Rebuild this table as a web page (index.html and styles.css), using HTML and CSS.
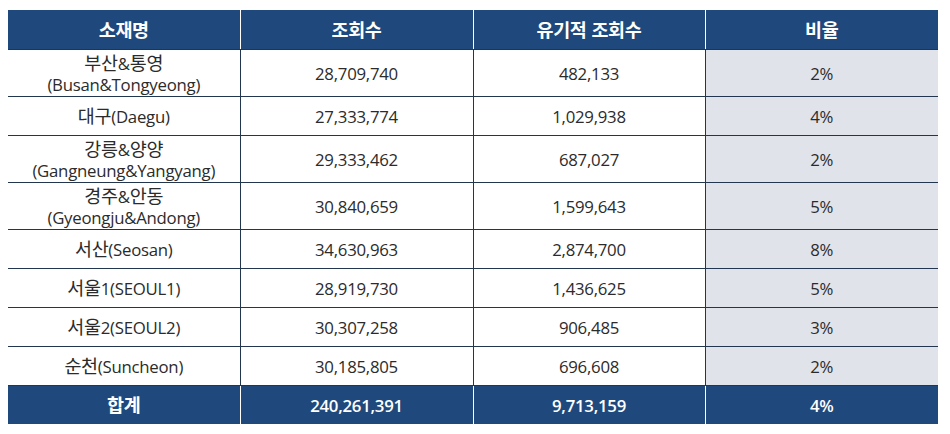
FILE: index.html
```html
<!DOCTYPE html>
<html lang="ko">
<head>
<meta charset="utf-8">
<link rel="stylesheet" href="styles.css">
</head>
<body>
<table class="stats">
  <colgroup>
    <col class="c1"><col class="c2"><col class="c3"><col class="c4">
  </colgroup>
  <thead>
    <tr class="head"><th><span class="ko">소재명</span></th><th><span class="ko">조회수</span></th><th><span class="ko">유기적 조회수</span></th><th><span class="ko">비율</span></th></tr>
  </thead>
  <tbody>
    <tr class="tall"><td><span class="ko">부산</span>&amp;<span class="ko">통영</span><br>(Busan&amp;Tongyeong)</td><td>28,709,740</td><td>482,133</td><td class="pct">2%</td></tr>
    <tr><td><span class="ko">대구</span>(Daegu)</td><td>27,333,774</td><td>1,029,938</td><td class="pct">4%</td></tr>
    <tr class="tall"><td><span class="ko">강릉</span>&amp;<span class="ko">양양</span><br>(Gangneung&amp;Yangyang)</td><td>29,333,462</td><td>687,027</td><td class="pct">2%</td></tr>
    <tr class="tall"><td><span class="ko">경주</span>&amp;<span class="ko">안동</span><br>(Gyeongju&amp;Andong)</td><td>30,840,659</td><td>1,599,643</td><td class="pct">5%</td></tr>
    <tr><td><span class="ko">서산</span>(Seosan)</td><td>34,630,963</td><td>2,874,700</td><td class="pct">8%</td></tr>
    <tr><td><span class="ko">서울</span>1(SEOUL1)</td><td>28,919,730</td><td>1,436,625</td><td class="pct">5%</td></tr>
    <tr><td><span class="ko">서울</span>2(SEOUL2)</td><td>30,307,258</td><td>906,485</td><td class="pct">3%</td></tr>
    <tr><td><span class="ko">순천</span>(Suncheon)</td><td>30,185,805</td><td>696,608</td><td class="pct">2%</td></tr>
  </tbody>
  <tfoot>
    <tr class="foot"><td><span class="ko">합계</span></td><td>240,261,391</td><td>9,713,159</td><td>4%</td></tr>
  </tfoot>
</table>
</body>
</html>
```

FILE: styles.css
```css
html, body {
  margin: 0;
  padding: 0;
  background: #ffffff;
}
body {
  padding: 10px 0 0 8px;
  font-family: "Open Sans", "Noto Sans CJK KR", sans-serif;
  color: #2b2b2b;
}
.stats {
  border-collapse: collapse;
  table-layout: fixed;
  width: 930px;
  font-size: 16.8px;
  letter-spacing: -0.25px;
}
.c1 { width: 232px; }
.c2 { width: 233px; }
.c3 { width: 232px; }
.c4 { width: 233px; }
.stats th, .stats td {
  padding: 0;
  text-align: center;
  vertical-align: middle;
  line-height: 21px;
}
.ko {
  font-family: "Noto Sans CJK KR", sans-serif;
  font-size: 1.1em;
  line-height: 21px;
  letter-spacing: -0.3px;
}
.head th {
  background: #1f497d;
  color: #ffffff;
  font-weight: 700;
  height: 39px;
  border-left: 1px solid #ffffff;
  border-bottom: 1px solid #1f3550;
}
.head th:first-child { border-left: none; }
tbody tr { height: 39px; }
tbody tr.tall { height: 47px; }
tbody td {
  border-bottom: 1px solid #22364f;
  border-left: 1px solid #22364f;
}
tbody td:first-child { border-left: none; }
tbody td.pct { background: #e1e3eb; }
.foot td {
  background: #1f497d;
  color: #ffffff;
  font-weight: 600;
  height: 38px;
  border-left: 1px solid #ffffff;
}
.foot td:first-child { border-left: none; }
```
